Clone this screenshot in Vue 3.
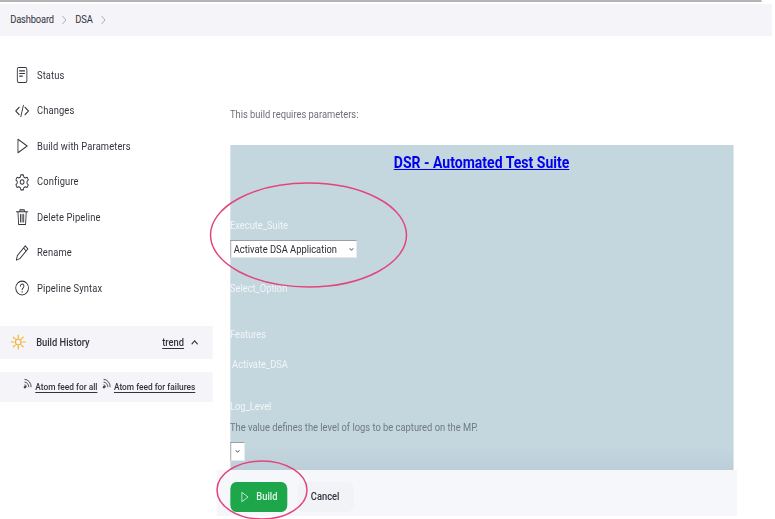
<script setup>
const items = [
  { label: 'Status', icon: 'status' },
  { label: 'Changes', icon: 'code' },
  { label: 'Build with Parameters', icon: 'play' },
  { label: 'Configure', icon: 'gear' },
  { label: 'Delete Pipeline', icon: 'trash' },
  { label: 'Rename', icon: 'pencil' },
  { label: 'Pipeline Syntax', icon: 'help' },
]
const rays = [0, 45, 90, 135, 180, 225, 270, 315]
</script>

<template>
  <div class="page">
    <div class="canvas">
      <div class="topline"></div>
      <nav class="crumbs">
        <span>Dashboard</span>
        <svg class="chev" viewBox="0 0 8 12"><path d="M2 2l4 4-4 4" /></svg>
        <span>DSA</span>
        <svg class="chev" viewBox="0 0 8 12"><path d="M2 2l4 4-4 4" /></svg>
      </nav>

      <div class="body">
        <aside class="side">
          <ul class="menu">
            <li v-for="it in items" :key="it.label" class="item">
              <span class="ico">
                <svg viewBox="0 0 24 24" width="18" height="18" class="line">
                  <template v-if="it.icon === 'status'">
                    <rect x="4.500" y="2" width="15" height="20" rx="2.500" />
                    <path d="M8 6.500h8M8 10h8M8 13.500h4.500" />
                  </template>
                  <template v-else-if="it.icon === 'code'">
                    <path d="M7.500 7L2 12l5.500 5M16.500 7L22 12l-5.500 5M14 4.500L10 19.500" />
                  </template>
                  <template v-else-if="it.icon === 'play'">
                    <path d="M5.500 3L20 12 5.500 21z" />
                  </template>
                  <template v-else-if="it.icon === 'gear'">
                    <circle cx="12" cy="12" r="3" />
                    <path d="M10 2.500h4l.7 2.900 2.300 1.300 2.800-.9 2 3.400-2.100 2v2.600l2.100 2-2 3.400-2.800-.9-2.300 1.300-.7 2.900h-4l-.7-2.900-2.300-1.300-2.800.9-2-3.400 2.100-2v-2.600l-2.100-2 2-3.400 2.800.9 2.300-1.300z" />
                  </template>
                  <template v-else-if="it.icon === 'trash'">
                    <path d="M3 5h18M8.500 5V2.500h7V5M5.500 5l1 17h11l1-17M9.500 8.500v10M12 8.500v10M14.500 8.500v10" />
                  </template>
                  <template v-else-if="it.icon === 'pencil'">
                    <path d="M3 21.500l1.500-6L17 2.500l4 4L8.500 19.500zM14.500 5.500L18 9" />
                  </template>
                  <template v-else>
                    <ellipse cx="12" cy="12" rx="10" ry="9.200" />
                    <path d="M9.300 9.500a2.800 2.800 0 1 1 4.300 2.400c-1 .6-1.600 1.100-1.600 2.300M12 16.600v1" />
                  </template>
                </svg>
              </span>
              <span class="item-label">{{ it.label }}</span>
            </li>
          </ul>

          <div class="history">
            <svg class="sun" viewBox="0 0 24 24" width="19" height="16" preserveAspectRatio="none">
              <circle cx="12" cy="12" r="4.200" />
              <path v-for="r in rays" :key="r" d="M12 1.500v4" :transform="`rotate(${r} 12 12)`" />
            </svg>
            <span class="history-title">Build History</span>
            <span class="trend">trend</span>
            <svg class="up" viewBox="0 0 12 8"><path d="M2 6l4-4 4 4" /></svg>
          </div>

          <div class="feeds">
            <svg class="rss" viewBox="0 0 12 12"><path d="M2 1.500a8.500 8.500 0 0 1 8.500 8.500M2 4.500A5.500 5.500 0 0 1 7.500 10M2 7.500A2.500 2.500 0 0 1 4.500 10" /><circle cx="2.500" cy="10" r="1" /></svg>
            <a class="feed">Atom feed for all</a>
            <svg class="rss rss2" viewBox="0 0 12 12"><path d="M2 1.500a8.500 8.500 0 0 1 8.500 8.500M2 4.500A5.500 5.500 0 0 1 7.500 10M2 7.500A2.500 2.500 0 0 1 4.500 10" /><circle cx="2.500" cy="10" r="1" /></svg>
            <a class="feed">Atom feed for failures</a>
          </div>
        </aside>

        <main class="main">
          <p class="intro">This build requires parameters:</p>
          <section class="panel">
            <h1 class="title"><a>DSR - Automated Test Suite</a></h1>
            <div class="param p-suite">Execute_Suite</div>
            <div class="select wide">
              <span>Activate DSA Application</span>
              <svg class="caret" viewBox="0 0 8 6"><path d="M1.500 1.500L4 4l2.500-2.500" /></svg>
            </div>
            <div class="param p-option">Select_Option</div>
            <div class="param p-features">Features</div>
            <div class="param p-activate">Activate_DSA</div>
            <div class="param p-log">Log_Level</div>
            <div class="desc">The value defines the level of logs to be captured on the MP.</div>
            <div class="select small">
              <svg class="caret" viewBox="0 0 8 6"><path d="M1.500 1.500L4 4l2.500-2.500" /></svg>
            </div>
          </section>
          <footer class="foot">
            <button class="build">
              <svg viewBox="0 0 12 14" width="12" height="12"><path d="M2 1.500L10.500 7 2 12.500z" /></svg>
              <span>Build</span>
            </button>
            <button class="cancel">Cancel</button>
          </footer>
        </main>
      </div>
    </div>

    <svg class="ink" viewBox="0 0 775 519" width="775" height="519">
      <ellipse cx="308.500" cy="235" rx="98" ry="52" />
      <ellipse cx="262" cy="490" rx="45" ry="29" />
    </svg>
  </div>
</template>

<style>
html, body { margin: 0; background: #fff; }
</style>

<style scoped>
.page {
  position: relative;
  width: 775px;
  height: 519px;
  overflow: hidden;
  background: #fff;
}
.canvas {
  width: 912px;
  height: 519px;
  transform: scaleX(0.85);
  transform-origin: left top;
  color: #33333d;
  font-family: Roboto, "Liberation Sans", sans-serif;
  font-size: 11px;
}
.topline { height: 2px; width: 896px; background: #b5b5b8; }
.crumbs {
  box-sizing: border-box;
  display: flex;
  align-items: center;
  gap: 8px;
  width: 908px;
  height: 32px;
  margin-top: 2px;
  padding: 0 0 1px 12px;
  background: #f4f4f9;
}
.crumbs span:first-child { letter-spacing: -0.200px; }
.chev { width: 9px; height: 12px; fill: none; stroke: #a8a8b0; stroke-width: 1; }
.body { display: flex; align-items: flex-start; }
.side { width: 249.500px; flex: none; }
.menu { list-style: none; margin: 21.500px 0 0; padding: 0; }
.item { display: flex; align-items: center; height: 35.500px; padding-left: 12px; }
.ico { width: 28px; display: flex; justify-content: center; flex: none; margin-right: 3.500px; }
.item-label { letter-spacing: 0.150px; }
.line { fill: none; stroke: #33333d; stroke-width: 1.400; stroke-linejoin: round; stroke-linecap: round; }
.history {
  display: flex;
  align-items: center;
  height: 33px;
  margin-top: 19.500px;
  padding-left: 12px;
  background: #f4f4f9;
  font-weight: 500;
}
.sun { fill: none; stroke: #f5b43a; stroke-width: 1.800; stroke-linecap: round; flex: none; }
.history-title { margin-left: 11.500px; flex: 1; }
.trend { text-decoration: underline; text-underline-offset: 2px; }
.up { width: 12px; height: 7px; margin: 0 15px 0 6px; fill: none; stroke: #33333d; stroke-width: 1.300; }
.feeds {
  display: flex;
  align-items: center;
  height: 30px;
  margin-top: 13px;
  padding-left: 26px;
  background: #f4f4f9;
  font-size: 9.800px;
  font-weight: 500;
}
.rss { width: 13px; height: 11px; fill: #33333d; stroke: #33333d; stroke-width: 1; margin-top: -6px; flex: none; }
.rss path { fill: none; }
.rss2 { margin-left: 4px; }
.feed { margin-left: 2.500px; text-decoration: underline; text-underline-offset: 2px; white-space: nowrap; }
.main { flex: 1; padding: 0 0 0 21px; min-width: 0; }
.intro { margin: 72px 0 0 0; color: #6f6f78; line-height: 14px; }
.panel {
  box-sizing: border-box;
  width: 592px;
  height: 325px;
  margin-top: 23px;
  background: linear-gradient(#c4d6de calc(100% - 24px), #bccfd9);
  color: #f2f6f8;
  display: flow-root;
}
.title {
  margin: 7px 0 0;
  text-align: center;
  font-size: 16.500px;
  font-weight: 700;
  line-height: 22px;
  color: #0000ee;
}
.title a { text-decoration: underline; }
.param { line-height: 14px; }
.p-suite { margin-top: 45px; }
.select {
  box-sizing: border-box;
  display: flex;
  align-items: center;
  justify-content: space-between;
  background: #fff;
  border: 1px solid #9c9ca6;
  border-right-color: #e6e6ea;
  border-bottom-color: #e6e6ea;
  color: #2c2c33;
  white-space: nowrap;
}
.wide { width: 149.500px; height: 18px; margin-top: 7px; padding: 0 2px 0 3.500px; }
.small { width: 17.500px; height: 19px; margin-top: 7px; justify-content: center; }
.caret { width: 7px; height: 5px; fill: none; stroke: #444; stroke-width: 1.200; flex: none; }
.p-option { margin-top: 24px; }
.p-features { margin-top: 32px; }
.p-activate { margin: 16px 0 0 2.500px; }
.p-log { margin-top: 28px; }
.desc { margin-top: 7px; line-height: 14px; color: #6f7a80; }
.foot {
  display: flex;
  align-items: center;
  gap: 12px;
  box-sizing: border-box;
  width: 612px;
  height: 46px;
  margin-left: -15.500px;
  padding: 7px 0 0 15.500px;
  background: #f5f7fa;
}
.build {
  display: flex;
  align-items: center;
  justify-content: center;
  gap: 8px;
  width: 67px;
  height: 30px;
  padding: 0;
  border: 0;
  border-radius: 7px;
  background: #1da64a;
  color: #e4f5ea;
  font: inherit;
  font-weight: 500;
}
.build svg { fill: none; stroke: #e4f5ea; stroke-width: 1; }
.cancel {
  width: 66px;
  height: 30px;
  padding: 0;
  border: 0;
  border-radius: 7px;
  background: #f1f3f6;
  color: #33333d;
  font: inherit;
  font-weight: 500;
}
.ink { position: absolute; left: 0; top: 0; pointer-events: none; fill: none; stroke: #e4447c; stroke-width: 1.500; }
</style>
